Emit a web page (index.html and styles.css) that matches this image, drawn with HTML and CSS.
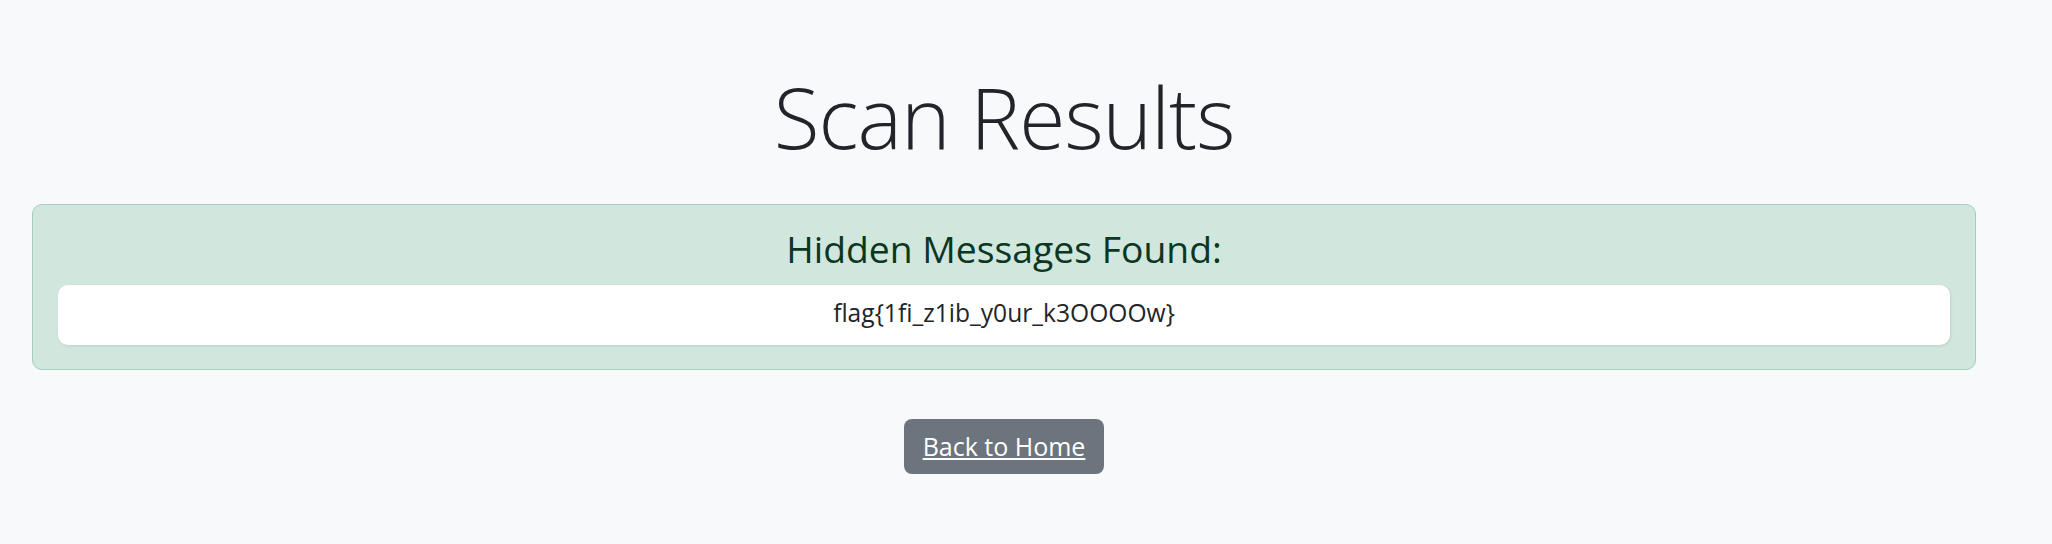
FILE: index.html
```html
<!DOCTYPE html>
<html lang="en">
<head>
    <meta charset="UTF-8">
    <meta name="viewport" content="width=device-width, initial-scale=1.0">
    <title>Scan Results</title>
    <link rel="stylesheet" href="styles.css">
</head>
<body>

    <div class="container">
        <h1 class="page-title">Scan Results</h1>

        <div class="result-alert">
            <h4>Hidden Messages Found:</h4>
            <div class="message-box">flag{1fi_z1ib_y0ur_k3OOOOw}</div>
        </div>

        <a href="/" class="btn-home">Back to Home</a>
    </div>

</body>
</html>
```

FILE: styles.css
```css
/* Page */
body {
    margin: 0;
    background-color: #f8f9fa;
    color: #212529;
    font-family: "Open Sans", "Noto Sans", sans-serif;
}

.container {
    display: flex;
    flex-direction: column;
    align-items: center;
    margin: 0 76px 0 32px;
    padding-top: 63px;
    text-align: center;
}

/* Title */
.page-title {
    font-size: 84px;
    font-weight: 300;
    letter-spacing: -1px;
    line-height: 108px;
    margin: 0 0 33px;
}

/* Success box */
.result-alert {
    align-self: stretch;
    padding: 20px 25px 24px;
    background-color: #d1e7dd;
    border: 1px solid #a3cfbb;
    border-radius: 10px;
    color: #0a3622;
}

.result-alert h4 {
    font-size: 37.3px;
    font-weight: 400;
    line-height: 47px;
    margin: 0 0 13px;
}

.message-box {
    padding: 8px 16px 12px;
    line-height: 40px;
    font-size: 24.6px;
    color: #212529;
    background-color: #fff;
    border-radius: 10px;
    box-shadow: 1px 1px 3px rgba(0, 0, 0, 0.1);
}

/* Button */
.btn-home {
    margin-top: 49px;
    padding: 0 19px;
    height: 55px;
    line-height: 55px;
    font-size: 25px;
    color: #fff;
    background-color: #6c757d;
    border-radius: 8px;
}
```
